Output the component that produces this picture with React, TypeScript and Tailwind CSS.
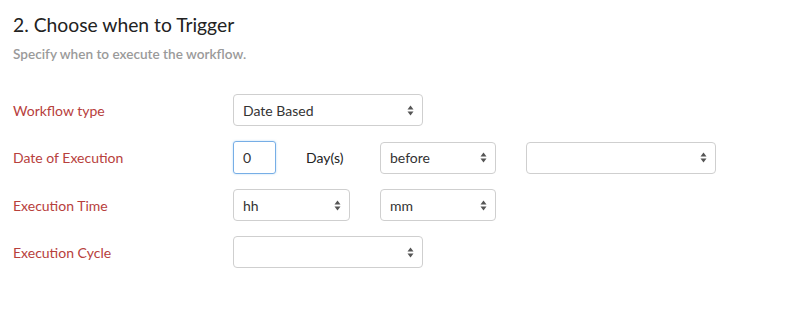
import React from "react";

const Arrows = () => (
  <svg width="7" height="11" viewBox="0 0 7 11" className="shrink-0">
    <path d="M3.5 0.5 L6.5 4.5 L0.5 4.5 Z" fill="#555" />
    <path d="M3.5 10.5 L6.5 6.5 L0.5 6.5 Z" fill="#555" />
  </svg>
);

const Select = ({ value, w }: { value?: string; w: string }) => (
  <div
    className={`${w} h-[32px] flex items-center justify-between pl-[9px] pr-[8px] border border-[#cfcfcf] rounded-[4px] bg-white text-[14px] text-[#333]`}
  >
    <span>{value}</span>
    <Arrows />
  </div>
);

const Label = ({ children }: { children: React.ReactNode }) => (
  <div className="w-[220px] text-[14px] text-[#b7403c]">{children}</div>
);

export default function App() {
  return (
    <div
      className="w-[786px] h-[310px] bg-white pl-[13px] pt-[14px]"
      style={{ fontFamily: "Lato, 'Open Sans', sans-serif" }}
    >
      <h2 className="text-[19.3px] leading-[22px] text-[#222]">2. Choose when to Trigger</h2>
      <p className="mt-[10px] text-[13.6px] leading-[16px] font-semibold text-[#9a9a9a]">
        Specify when to execute the workflow.
      </p>
      <div className="mt-[32px] flex flex-col gap-[15px]">
        <div className="flex items-center">
          <Label>Workflow type</Label>
          <Select value="Date Based" w="w-[190px]" />
        </div>
        <div className="flex items-center">
          <Label>Date of Execution</Label>
          <div className="w-[43px] h-[33px] flex items-center pl-[9px] border border-[#77aee6] rounded-[3px] text-[14px] text-[#333] shadow-[0_0_2px_rgba(102,175,233,0.5)]">
            0
          </div>
          <div className="ml-[30px] w-[74px] text-[14px] text-[#222]">Day(s)</div>
          <Select value="before" w="w-[116px]" />
          <div className="ml-[30px]">
            <Select w="w-[190px]" />
          </div>
        </div>
        <div className="flex items-center">
          <Label>Execution Time</Label>
          <Select value="hh" w="w-[117px]" />
          <div className="ml-[30px]">
            <Select value="mm" w="w-[116px]" />
          </div>
        </div>
        <div className="flex items-center">
          <Label>Execution Cycle</Label>
          <Select w="w-[190px]" />
        </div>
      </div>
    </div>
  );
}
